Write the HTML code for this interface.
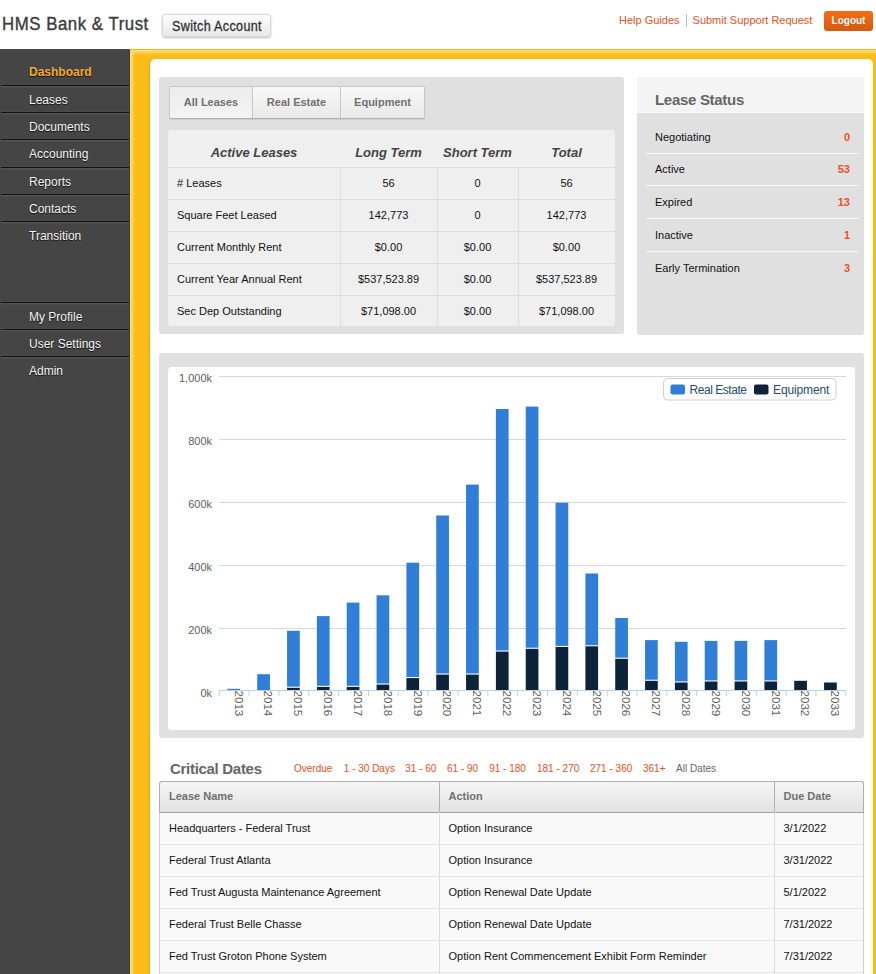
<!DOCTYPE html>
<html><head><meta charset="utf-8">
<style>
*{box-sizing:border-box}
html,body{margin:0;padding:0;width:876px;height:974px;overflow:hidden;background:#fff;font-family:"Liberation Sans",sans-serif;color:#000}
.a{position:absolute}
#logo{left:2px;top:13px;font-size:19px;color:#3c3c3c;letter-spacing:0.6px;white-space:nowrap;-webkit-text-stroke:0.4px #3c3c3c;transform:scaleX(0.885);transform-origin:0 0}
#switch{left:162px;top:14px;width:109px;height:23px;border:1px solid #d0d0d0;border-radius:3px;background:linear-gradient(#fdfdfd,#e8e8e8);box-shadow:0 1px 2px rgba(0,0,0,.25);font-size:14px;color:#333;text-align:center;line-height:22px;white-space:nowrap;-webkit-text-stroke:0.3px #333;border-color:#d8d8d8}
#links{left:619px;top:14px;font-size:11px;color:#ec4f22;white-space:nowrap}
#links .sep{display:inline-block;width:1px;height:13px;background:#bbb;vertical-align:-3px;margin:0 6px 0 6px}
#logout{left:824px;top:11px;width:49px;height:20px;border-radius:3px;background:linear-gradient(#f56d12,#d65a0f);color:#fff;font-weight:bold;font-size:10px;text-align:center;line-height:20px;text-shadow:0 0 1px rgba(120,40,0,.3)}
#side{left:0;top:49px;width:130px;height:925px;background:#454545}
.nav{position:absolute;left:0;width:130px;height:27px;}
.nav span{position:absolute;left:29px;top:7px;font-size:12px;color:#f4f4f4;text-shadow:0 1px 1px #111;white-space:nowrap}
.nav.line{left:1px;width:129px;border-top:1px solid #121212;box-shadow:inset 0 1px 0 #535353,inset 0 2px 0 #4b4b4b,0 -1px 0 #4a4a4a}
.nav.line span{left:28px}
#yellow{left:129px;top:49px;width:747px;height:925px;background:#fbbd15;border-left:1px solid #383c4c;border-top:1px solid #f8b70e;box-shadow:inset 3px 3px 3px rgba(255,255,255,.45)}
#white{left:150px;top:59px;width:723px;height:930px;background:#fff;border-radius:5px;box-shadow:-1px 0 1px rgba(180,120,0,.35)}
.grey{background:#e0e0e0;border-radius:3px}
.tab{position:absolute;top:86px;height:33px;box-shadow:0 1px 1px rgba(0,0,0,.08);border:1px solid #c8c8c8;border-bottom-color:#b0b0b0;background:linear-gradient(#f8f8f8,#e9e9e9);font-weight:bold;font-size:11px;color:#707070;text-align:center;line-height:31px}
.cell{position:absolute;font-size:11px;white-space:nowrap}
.hd{font-weight:bold;font-style:italic;font-size:13px;color:#444}
.ls{position:absolute;left:655px;font-size:11px;color:#111}
.lsn{position:absolute;right:26px;font-size:11px;font-weight:bold;color:#f04f1f;text-align:right}
.cd{position:absolute;font-size:10px;color:#ec4f22;top:763px;white-space:nowrap}
</style></head><body>
<div id="logo" class="a">HMS Bank &amp; Trust</div>
<div id="switch" class="a"><span style="display:inline-block;transform:scaleX(0.9);transform-origin:50% 50%;letter-spacing:0.35px">Switch Account</span></div>
<div id="links" class="a">Help Guides<span class="sep"></span>Submit Support Request</div>
<div id="logout" class="a">Logout</div>
<div id="side" class="a"></div>
<div class="nav" style="top:58px"><span style="font-weight:bold;color:#f7a933">Dashboard</span></div>
<div class="nav line" style="top:85px"><span>Leases</span></div>
<div class="nav line" style="top:112px"><span>Documents</span></div>
<div class="nav line" style="top:139px"><span>Accounting</span></div>
<div class="nav line" style="top:167px"><span>Reports</span></div>
<div class="nav line" style="top:194px"><span>Contacts</span></div>
<div class="nav line" style="top:221px"><span>Transition</span></div>
<div class="nav line" style="top:302px"><span>My Profile</span></div>
<div class="nav line" style="top:329px"><span>User Settings</span></div>
<div class="nav line" style="top:356px"><span>Admin</span></div>
<div id="yellow" class="a"></div>
<div id="white" class="a"></div>
<div class="a grey" style="left:159px;top:77px;width:465px;height:257px"></div>
<div class="tab" style="left:169px;width:84px;border-radius:2px 0 0 2px;background:linear-gradient(#ececec,#f4f4f4)">All Leases</div>
<div class="tab" style="left:252px;width:89px">Real Estate</div>
<div class="tab" style="left:340px;width:85px;border-radius:0 2px 2px 0">Equipment</div>
<div class="a" style="left:168px;top:130px;width:447px;height:196px;background:#efefef;border-radius:3px"></div>
<div class="a" style="left:168px;top:167px;width:447px;height:1px;background:#dedede"></div>
<div class="a" style="left:168px;top:199px;width:447px;height:1px;background:#dedede"></div>
<div class="a" style="left:168px;top:231px;width:447px;height:1px;background:#dedede"></div>
<div class="a" style="left:168px;top:263px;width:447px;height:1px;background:#dedede"></div>
<div class="a" style="left:168px;top:295px;width:447px;height:1px;background:#dedede"></div>
<div class="a" style="left:340px;top:167px;width:1px;height:159px;background:#dedede"></div>
<div class="a" style="left:437px;top:167px;width:1px;height:159px;background:#dedede"></div>
<div class="a" style="left:518px;top:167px;width:1px;height:159px;background:#dedede"></div>
<div class="cell hd" style="left:168px;width:172px;top:145px;text-align:center">Active Leases</div>
<div class="cell hd" style="left:340px;width:97px;top:145px;text-align:center">Long Term</div>
<div class="cell hd" style="left:437px;width:81px;top:145px;text-align:center">Short Term</div>
<div class="cell hd" style="left:518px;width:97px;top:145px;text-align:center">Total</div>
<div class="cell" style="left:177px;top:177px;color:#111"># Leases</div>
<div class="cell" style="left:340px;width:97px;top:177px;text-align:center;color:#111">56</div>
<div class="cell" style="left:437px;width:81px;top:177px;text-align:center;color:#111">0</div>
<div class="cell" style="left:518px;width:97px;top:177px;text-align:center;color:#111">56</div>
<div class="cell" style="left:177px;top:209px;color:#111">Square Feet Leased</div>
<div class="cell" style="left:340px;width:97px;top:209px;text-align:center;color:#111">142,773</div>
<div class="cell" style="left:437px;width:81px;top:209px;text-align:center;color:#111">0</div>
<div class="cell" style="left:518px;width:97px;top:209px;text-align:center;color:#111">142,773</div>
<div class="cell" style="left:177px;top:241px;color:#111">Current Monthly Rent</div>
<div class="cell" style="left:340px;width:97px;top:241px;text-align:center;color:#111">$0.00</div>
<div class="cell" style="left:437px;width:81px;top:241px;text-align:center;color:#111">$0.00</div>
<div class="cell" style="left:518px;width:97px;top:241px;text-align:center;color:#111">$0.00</div>
<div class="cell" style="left:177px;top:273px;color:#111">Current Year Annual Rent</div>
<div class="cell" style="left:340px;width:97px;top:273px;text-align:center;color:#111">$537,523.89</div>
<div class="cell" style="left:437px;width:81px;top:273px;text-align:center;color:#111">$0.00</div>
<div class="cell" style="left:518px;width:97px;top:273px;text-align:center;color:#111">$537,523.89</div>
<div class="cell" style="left:177px;top:305px;color:#111">Sec Dep Outstanding</div>
<div class="cell" style="left:340px;width:97px;top:305px;text-align:center;color:#111">$71,098.00</div>
<div class="cell" style="left:437px;width:81px;top:305px;text-align:center;color:#111">$0.00</div>
<div class="cell" style="left:518px;width:97px;top:305px;text-align:center;color:#111">$71,098.00</div>
<div class="a grey" style="left:637px;top:77px;width:227px;height:258px"></div>
<div class="a" style="left:637px;top:77px;width:227px;height:36px;background:#f4f4f4;border-radius:3px 3px 0 0;border-bottom:1px solid #fafafa"></div>
<div class="a" style="left:655px;top:91px;font-size:15px;font-weight:bold;color:#666;letter-spacing:-0.3px">Lease Status</div>
<div class="ls" style="top:130.5px">Negotiating</div>
<div class="lsn" style="top:130.5px">0</div>
<div class="a" style="left:646px;top:152.5px;width:213px;height:1px;background:#f6f6f6"></div>
<div class="ls" style="top:163.2px">Active</div>
<div class="lsn" style="top:163.2px">53</div>
<div class="a" style="left:646px;top:185.2px;width:213px;height:1px;background:#f6f6f6"></div>
<div class="ls" style="top:196.0px">Expired</div>
<div class="lsn" style="top:196.0px">13</div>
<div class="a" style="left:646px;top:218.0px;width:213px;height:1px;background:#f6f6f6"></div>
<div class="ls" style="top:228.8px">Inactive</div>
<div class="lsn" style="top:228.8px">1</div>
<div class="a" style="left:646px;top:250.8px;width:213px;height:1px;background:#f6f6f6"></div>
<div class="ls" style="top:261.5px">Early Termination</div>
<div class="lsn" style="top:261.5px">3</div>
<div class="a grey" style="left:159px;top:353px;width:705px;height:385px"></div>
<div class="a" style="left:168px;top:367px;width:687px;height:363px;background:#fff;border-radius:4px"></div>
<svg class="a" style="left:0;top:0" width="876" height="974" viewBox="0 0 876 974" font-family="Liberation Sans, sans-serif"><text x="212" y="696.50" text-anchor="end" font-size="11" fill="#606060">0k</text><rect x="219" y="628" width="627" height="1" fill="#d8d8d8"/><text x="212" y="633.50" text-anchor="end" font-size="11" fill="#606060">200k</text><rect x="219" y="565" width="627" height="1" fill="#d8d8d8"/><text x="212" y="570.50" text-anchor="end" font-size="11" fill="#606060">400k</text><rect x="219" y="502" width="627" height="1" fill="#d8d8d8"/><text x="212" y="507.50" text-anchor="end" font-size="11" fill="#606060">600k</text><rect x="219" y="439" width="627" height="1" fill="#d8d8d8"/><text x="212" y="444.50" text-anchor="end" font-size="11" fill="#606060">800k</text><rect x="219" y="376" width="627" height="1" fill="#d8d8d8"/><text x="212" y="381.50" text-anchor="end" font-size="11" fill="#606060">1,000k</text><rect x="219" y="690" width="627" height="1" fill="#c0d0e0"/><rect x="218.80" y="691" width="1" height="5" fill="#c0d0e0"/><rect x="248.63" y="691" width="1" height="5" fill="#c0d0e0"/><rect x="278.47" y="691" width="1" height="5" fill="#c0d0e0"/><rect x="308.30" y="691" width="1" height="5" fill="#c0d0e0"/><rect x="338.13" y="691" width="1" height="5" fill="#c0d0e0"/><rect x="367.97" y="691" width="1" height="5" fill="#c0d0e0"/><rect x="397.80" y="691" width="1" height="5" fill="#c0d0e0"/><rect x="427.63" y="691" width="1" height="5" fill="#c0d0e0"/><rect x="457.47" y="691" width="1" height="5" fill="#c0d0e0"/><rect x="487.30" y="691" width="1" height="5" fill="#c0d0e0"/><rect x="517.13" y="691" width="1" height="5" fill="#c0d0e0"/><rect x="546.97" y="691" width="1" height="5" fill="#c0d0e0"/><rect x="576.80" y="691" width="1" height="5" fill="#c0d0e0"/><rect x="606.63" y="691" width="1" height="5" fill="#c0d0e0"/><rect x="636.47" y="691" width="1" height="5" fill="#c0d0e0"/><rect x="666.30" y="691" width="1" height="5" fill="#c0d0e0"/><rect x="696.13" y="691" width="1" height="5" fill="#c0d0e0"/><rect x="725.97" y="691" width="1" height="5" fill="#c0d0e0"/><rect x="755.80" y="691" width="1" height="5" fill="#c0d0e0"/><rect x="785.63" y="691" width="1" height="5" fill="#c0d0e0"/><rect x="815.47" y="691" width="1" height="5" fill="#c0d0e0"/><rect x="845.30" y="691" width="1" height="5" fill="#c0d0e0"/><rect x="227.40" y="688.80" width="12.7" height="1.20" fill="#2f7ed8"/><text transform="translate(234.62,690.50) rotate(90)" font-size="11.6" fill="#606060">2013</text><rect x="257.23" y="674.20" width="12.7" height="15.80" fill="#2f7ed8"/><text transform="translate(264.45,690.50) rotate(90)" font-size="11.6" fill="#606060">2014</text><rect x="287.07" y="687.80" width="12.7" height="2.20" fill="#0d233a"/><rect x="287.07" y="630.80" width="12.7" height="55.90" fill="#2f7ed8"/><text transform="translate(294.28,690.50) rotate(90)" font-size="11.6" fill="#606060">2015</text><rect x="316.90" y="686.90" width="12.7" height="3.10" fill="#0d233a"/><rect x="316.90" y="616.10" width="12.7" height="69.70" fill="#2f7ed8"/><text transform="translate(324.12,690.50) rotate(90)" font-size="11.6" fill="#606060">2016</text><rect x="346.73" y="686.90" width="12.7" height="3.10" fill="#0d233a"/><rect x="346.73" y="602.60" width="12.7" height="83.20" fill="#2f7ed8"/><text transform="translate(353.95,690.50) rotate(90)" font-size="11.6" fill="#606060">2017</text><rect x="376.57" y="684.60" width="12.7" height="5.40" fill="#0d233a"/><rect x="376.57" y="595.30" width="12.7" height="88.20" fill="#2f7ed8"/><text transform="translate(383.78,690.50) rotate(90)" font-size="11.6" fill="#606060">2018</text><rect x="406.40" y="678.10" width="12.7" height="11.90" fill="#0d233a"/><rect x="406.40" y="562.70" width="12.7" height="114.30" fill="#2f7ed8"/><text transform="translate(413.62,690.50) rotate(90)" font-size="11.6" fill="#606060">2019</text><rect x="436.23" y="674.60" width="12.7" height="15.40" fill="#0d233a"/><rect x="436.23" y="515.50" width="12.7" height="158.00" fill="#2f7ed8"/><text transform="translate(443.45,690.50) rotate(90)" font-size="11.6" fill="#606060">2020</text><rect x="466.07" y="674.60" width="12.7" height="15.40" fill="#0d233a"/><rect x="466.07" y="484.60" width="12.7" height="188.90" fill="#2f7ed8"/><text transform="translate(473.28,690.50) rotate(90)" font-size="11.6" fill="#606060">2021</text><rect x="495.90" y="651.60" width="12.7" height="38.40" fill="#0d233a"/><rect x="495.90" y="409.00" width="12.7" height="241.50" fill="#2f7ed8"/><text transform="translate(503.12,690.50) rotate(90)" font-size="11.6" fill="#606060">2022</text><rect x="525.73" y="648.80" width="12.7" height="41.20" fill="#0d233a"/><rect x="525.73" y="406.60" width="12.7" height="241.10" fill="#2f7ed8"/><text transform="translate(532.95,690.50) rotate(90)" font-size="11.6" fill="#606060">2023</text><rect x="555.57" y="647.00" width="12.7" height="43.00" fill="#0d233a"/><rect x="555.57" y="502.70" width="12.7" height="143.20" fill="#2f7ed8"/><text transform="translate(562.78,690.50) rotate(90)" font-size="11.6" fill="#606060">2024</text><rect x="585.40" y="646.30" width="12.7" height="43.70" fill="#0d233a"/><rect x="585.40" y="573.50" width="12.7" height="71.70" fill="#2f7ed8"/><text transform="translate(592.62,690.50) rotate(90)" font-size="11.6" fill="#606060">2025</text><rect x="615.23" y="658.80" width="12.7" height="31.20" fill="#0d233a"/><rect x="615.23" y="618.00" width="12.7" height="39.70" fill="#2f7ed8"/><text transform="translate(622.45,690.50) rotate(90)" font-size="11.6" fill="#606060">2026</text><rect x="645.07" y="680.80" width="12.7" height="9.20" fill="#0d233a"/><rect x="645.07" y="640.10" width="12.7" height="39.60" fill="#2f7ed8"/><text transform="translate(652.28,690.50) rotate(90)" font-size="11.6" fill="#606060">2027</text><rect x="674.90" y="682.50" width="12.7" height="7.50" fill="#0d233a"/><rect x="674.90" y="641.80" width="12.7" height="39.60" fill="#2f7ed8"/><text transform="translate(682.12,690.50) rotate(90)" font-size="11.6" fill="#606060">2028</text><rect x="704.73" y="681.50" width="12.7" height="8.50" fill="#0d233a"/><rect x="704.73" y="640.90" width="12.7" height="39.50" fill="#2f7ed8"/><text transform="translate(711.95,690.50) rotate(90)" font-size="11.6" fill="#606060">2029</text><rect x="734.57" y="681.50" width="12.7" height="8.50" fill="#0d233a"/><rect x="734.57" y="640.90" width="12.7" height="39.50" fill="#2f7ed8"/><text transform="translate(741.78,690.50) rotate(90)" font-size="11.6" fill="#606060">2030</text><rect x="764.40" y="681.50" width="12.7" height="8.50" fill="#0d233a"/><rect x="764.40" y="640.10" width="12.7" height="40.30" fill="#2f7ed8"/><text transform="translate(771.62,690.50) rotate(90)" font-size="11.6" fill="#606060">2031</text><rect x="794.23" y="680.80" width="12.7" height="9.20" fill="#0d233a"/><text transform="translate(801.45,690.50) rotate(90)" font-size="11.6" fill="#606060">2032</text><rect x="824.07" y="682.50" width="12.7" height="7.50" fill="#0d233a"/><text transform="translate(831.28,690.50) rotate(90)" font-size="11.6" fill="#606060">2033</text><rect x="663.5" y="378.5" width="172.5" height="21.5" rx="4" fill="#fff" stroke="#d0d0d0" stroke-width="1"/><rect x="670.5" y="384.5" width="14.5" height="10" rx="2" fill="#2f7ed8"/><text x="689.5" y="394" font-size="12" letter-spacing="-0.45" fill="#274b6d">Real Estate</text><rect x="754" y="384.5" width="14.5" height="10" rx="2" fill="#0d233a"/><text x="773" y="394" font-size="12" letter-spacing="-0.12" fill="#274b6d">Equipment</text></svg>
<div class="a" style="left:170px;top:760px;font-size:15px;font-weight:bold;color:#666;letter-spacing:-0.3px">Critical Dates</div>
<div class="cd" style="left:294px;color:#ec4f22">Overdue</div>
<div class="cd" style="left:343.8px;color:#ec4f22">1 - 30 Days</div>
<div class="cd" style="left:405.2px;color:#ec4f22">31 - 60</div>
<div class="cd" style="left:447px;color:#ec4f22">61 - 90</div>
<div class="cd" style="left:489.2px;color:#ec4f22">91 - 180</div>
<div class="cd" style="left:537px;color:#ec4f22">181 - 270</div>
<div class="cd" style="left:590px;color:#ec4f22">271 - 360</div>
<div class="cd" style="left:643px;color:#ec4f22">361+</div>
<div class="cd" style="left:676px;color:#666">All Dates</div>
<div class="a" style="left:159px;top:781px;width:705px;height:200px;border:1px solid #cfcfcf;border-radius:3px;background:#f9f9f9"></div>
<div class="a" style="left:159px;top:781px;width:705px;height:32px;border:1px solid #b0b0b0;border-bottom:1px solid #a0a0a0;border-radius:3px 3px 0 0;background:linear-gradient(#f6f6f6,#e2e2e2)"></div>
<div class="a" style="left:438.5px;top:782px;width:1px;height:200px;background:#dcdcdc"></div>
<div class="a" style="left:438.5px;top:782px;width:1px;height:30px;background:#b0b0b0"></div>
<div class="a" style="left:773.5px;top:782px;width:1px;height:200px;background:#dcdcdc"></div>
<div class="a" style="left:773.5px;top:782px;width:1px;height:30px;background:#b0b0b0"></div>
<div class="cell" style="left:169px;top:790px;font-weight:bold;color:#707070">Lease Name</div>
<div class="cell" style="left:448.5px;top:790px;font-weight:bold;color:#707070">Action</div>
<div class="cell" style="left:783.5px;top:790px;font-weight:bold;color:#707070">Due Date</div>
<div class="cell" style="left:169px;top:822px;color:#111">Headquarters - Federal Trust</div>
<div class="cell" style="left:448.5px;top:822px;color:#111">Option Insurance</div>
<div class="cell" style="left:783.5px;top:822px;color:#111">3/1/2022</div>
<div class="a" style="left:160px;top:844px;width:703px;height:1px;background:#e2e2e2"></div>
<div class="cell" style="left:169px;top:854px;color:#111">Federal Trust Atlanta</div>
<div class="cell" style="left:448.5px;top:854px;color:#111">Option Insurance</div>
<div class="cell" style="left:783.5px;top:854px;color:#111">3/31/2022</div>
<div class="a" style="left:160px;top:876px;width:703px;height:1px;background:#e2e2e2"></div>
<div class="cell" style="left:169px;top:886px;color:#111">Fed Trust Augusta Maintenance Agreement</div>
<div class="cell" style="left:448.5px;top:886px;color:#111">Option Renewal Date Update</div>
<div class="cell" style="left:783.5px;top:886px;color:#111">5/1/2022</div>
<div class="a" style="left:160px;top:908px;width:703px;height:1px;background:#e2e2e2"></div>
<div class="cell" style="left:169px;top:918px;color:#111">Federal Trust Belle Chasse</div>
<div class="cell" style="left:448.5px;top:918px;color:#111">Option Renewal Date Update</div>
<div class="cell" style="left:783.5px;top:918px;color:#111">7/31/2022</div>
<div class="a" style="left:160px;top:940px;width:703px;height:1px;background:#e2e2e2"></div>
<div class="cell" style="left:169px;top:950px;color:#111">Fed Trust Groton Phone System</div>
<div class="cell" style="left:448.5px;top:950px;color:#111">Option Rent Commencement Exhibit Form Reminder</div>
<div class="cell" style="left:783.5px;top:950px;color:#111">7/31/2022</div>
<div class="a" style="left:160px;top:972px;width:703px;height:1px;background:#e2e2e2"></div>
</body></html>
